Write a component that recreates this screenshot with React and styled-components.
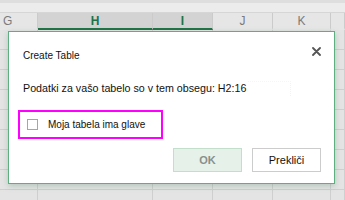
import styled, { createGlobalStyle } from "styled-components";

const GlobalStyle = createGlobalStyle`
  html, body {
    margin: 0;
    padding: 0;
    width: 345px;
    height: 200px;
    overflow: hidden;
    background: #e4e4e4;
    font-family: "Liberation Sans", Arial, sans-serif;
  }
`;

const columns = [
  { name: "G", width: 38, selected: false, align: "left" },
  { name: "H", width: 115, selected: true },
  { name: "I", width: 60, selected: true },
  { name: "J", width: 60, selected: false },
  { name: "K", width: 58, selected: false },
  { name: "", width: 14, selected: false },
];

const rows = [0, 1, 2, 3, 4, 5, 6, 7, 8];

const App = () => {
  return (
    <>
      <GlobalStyle />
      <Sheet>
        <TopStrip />
        <HeaderRow>
          {columns.map((c, i) => (
            <HeaderCell key={i} $w={c.width} $selected={c.selected} $align={c.align}>
              {c.name}
            </HeaderCell>
          ))}
        </HeaderRow>
        {rows.map((r) => (
          <GridRow key={r}>
            {columns.map((c, i) => (
              <Cell key={i} $w={c.width} />
            ))}
          </GridRow>
        ))}

        <Dialog>
          <TitleBar>
            <Title>Create Table</Title>
            <CloseButton aria-label="close">
              <svg width="9" height="9" viewBox="0 0 9 9">
                <path d="M1 1 L8 8 M8 1 L1 8" stroke="#555" strokeWidth="1.8" strokeLinecap="round" />
              </svg>
            </CloseButton>
          </TitleBar>
          <RangeRow>
            <RangeText>Podatki za vašo tabelo so v tem obsegu: H2:16</RangeText>
            <RangeField />
          </RangeRow>
          <Highlight>
            <CheckBox />
            <CheckLabel>Moja tabela ima glave</CheckLabel>
          </Highlight>
          <Buttons>
            <Button $primary>OK</Button>
            <Button>Prekliči</Button>
          </Buttons>
        </Dialog>
      </Sheet>
    </>
  );
};

const Sheet = styled.div`
  position: relative;
  width: 345px;
  height: 200px;
  overflow: hidden;
  background: #e4e4e4;
`;

const TopStrip = styled.div`
  height: 12px;
  background: #ececec;
  border-top: 3px solid #dedede;
  box-sizing: border-box;
`;

const HeaderRow = styled.div`
  display: flex;
  height: 18px;
  background: #e6e6e6;
  border-top: 1px solid #d6d6d6;
  box-sizing: border-box;
`;

const HeaderCell = styled.div`
  flex: 0 0 ${(p) => p.$w}px;
  box-sizing: border-box;
  display: flex;
  align-items: center;
  justify-content: ${(p) => (p.$align === "left" ? "flex-start" : "center")};
  padding-left: ${(p) => (p.$align === "left" ? "3px" : "0")};
  border-right: 1px solid #cbcbcb;
  font-size: 12px;
  font-weight: ${(p) => (p.$selected ? 700 : 400)};
  color: ${(p) => (p.$selected ? "#217346" : "#7a7a7a")};
  background: ${(p) => (p.$selected ? "#d3d3d3" : "transparent")};
  border-bottom: 2px solid ${(p) => (p.$selected ? "#217346" : "transparent")};
`;

const GridRow = styled.div`
  display: flex;
  height: 20px;
  box-sizing: border-box;
  border-bottom: 1px solid #cfcfcf;
`;

const Cell = styled.div`
  flex: 0 0 ${(p) => p.$w}px;
  box-sizing: border-box;
  border-right: 1px solid #cfcfcf;
`;

const Dialog = styled.div`
  position: absolute;
  left: 8px;
  top: 31px;
  width: 327px;
  height: 153px;
  box-sizing: border-box;
  background: #ffffff;
  border: 1px solid #5fae7f;
  box-shadow: 0 2px 6px rgba(33, 115, 70, 0.25);
  padding: 0 13px 0 14px;
  display: flex;
  flex-direction: column;
`;

const TitleBar = styled.div`
  display: flex;
  align-items: center;
  justify-content: space-between;
  height: 18px;
  margin-top: 14px;
`;

const Title = styled.div`
  font-size: 10px;
  color: #111;
`;

const CloseButton = styled.div`
  display: flex;
  align-items: center;
  margin-top: -7px;
`;

const RangeRow = styled.div`
  display: flex;
  align-items: center;
  margin-top: 15px;
  height: 18px;
`;

const RangeText = styled.div`
  font-size: 10.7px;
  color: #111;
  white-space: nowrap;
`;

const RangeField = styled.div`
  flex: 0 0 42px;
  height: 14px;
  margin-left: 2px;
  border-right: 1px dotted #f3f3f3;
  border-top: 1px dotted #f6f6f6;
`;

const Highlight = styled.div`
  display: flex;
  align-items: center;
  gap: 10px;
  width: 145px;
  height: 29px;
  box-sizing: border-box;
  margin-top: 13px;
  margin-left: -5px;
  padding-left: 7px;
  border: 2px solid #ff00ff;
`;

const CheckBox = styled.div`
  width: 11px;
  height: 11px;
  border: 1px solid #a6a6a6;
  box-sizing: border-box;
  background: #fff;
`;

const CheckLabel = styled.div`
  font-size: 10px;
  color: #111;
`;

const Buttons = styled.div`
  display: flex;
  justify-content: flex-end;
  gap: 10px;
  margin-top: 9px;
`;

const Button = styled.div`
  width: 69px;
  height: 24px;
  box-sizing: border-box;
  display: flex;
  align-items: center;
  justify-content: center;
  font-size: 11px;
  font-weight: ${(p) => (p.$primary ? 700 : 400)};
  color: ${(p) => (p.$primary ? "#8a8f8c" : "#111")};
  background: ${(p) => (p.$primary ? "#e5f1e9" : "#ffffff")};
  border: 1px solid ${(p) => (p.$primary ? "#c3dfcc" : "#cccccc")};
`;

export default App;
